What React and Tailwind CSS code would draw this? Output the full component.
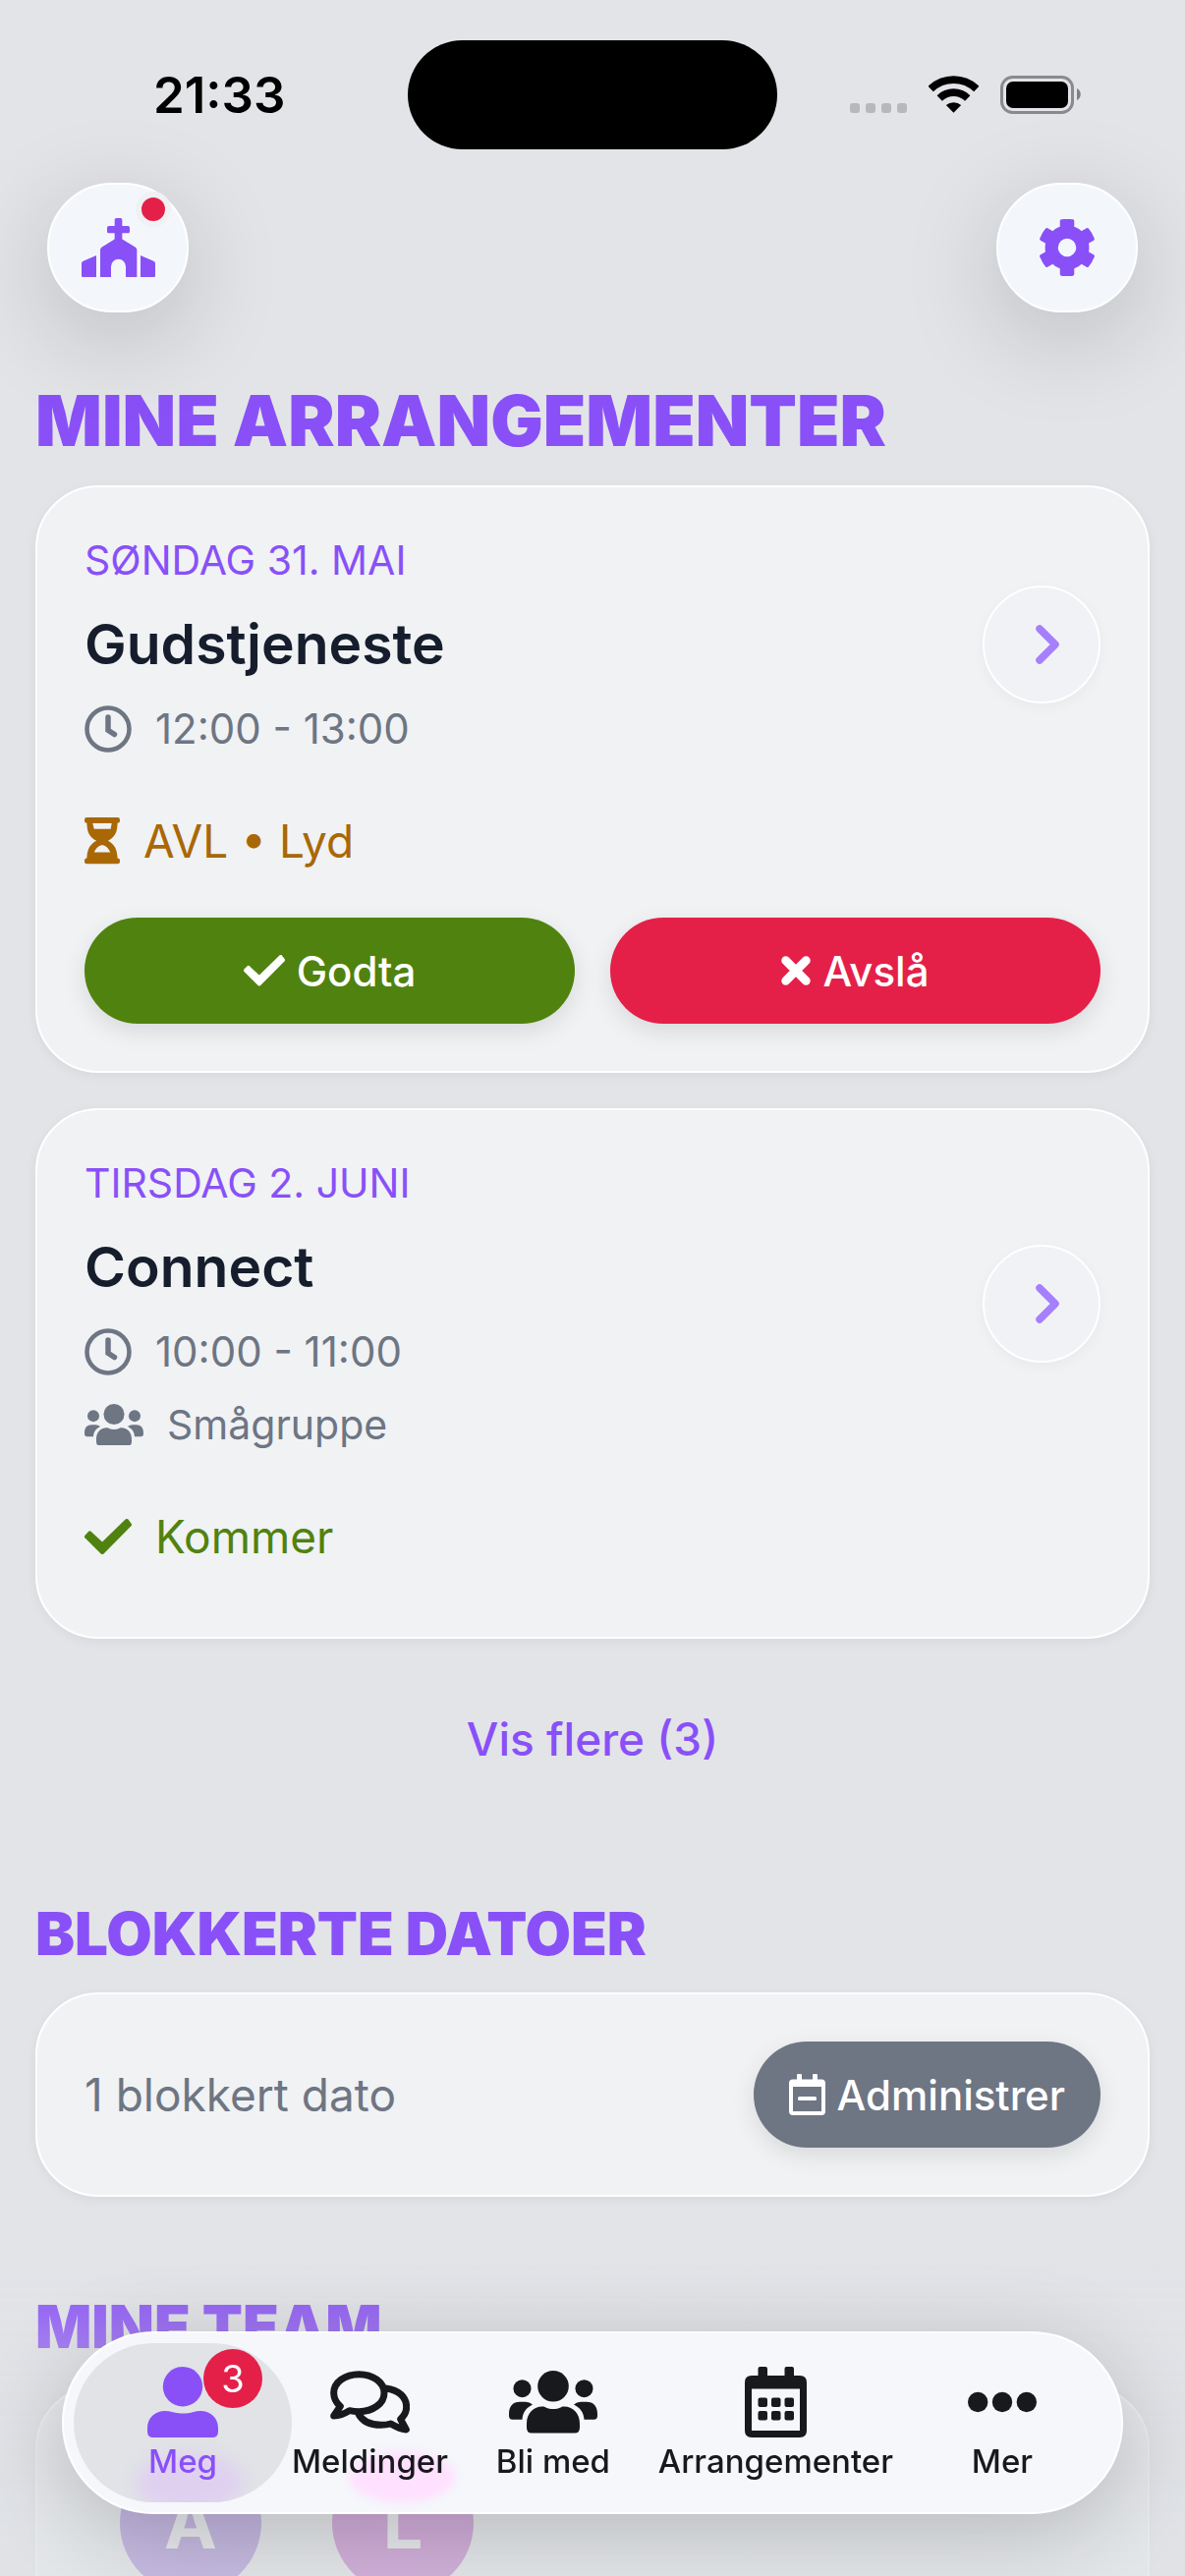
import { useState } from 'react';

/* ---------- Iconos ---------- */

const ChurchIcon = ({ className }) => (
  <svg viewBox="156 156 225 180" className={className} fill="currentColor" aria-hidden="true">
    <rect x="257" y="156" width="23" height="76" rx="5" />
    <rect x="234" y="180" width="69" height="22" rx="5" />
    <path d="M258 220h21l42 25q4 3 4 8v83h-34v-32a22.500 22.500 0 0 0-45 0v32h-33v-83q0-5 4-8z" />
    <path d="M201 270v66h-41q-4 0-4-4v-38q0-5 5-7z" />
    <path d="M336 270v66h41q4 0 4-4v-38q0-5-5-7z" />
  </svg>
);

const GearIcon = ({ className }) => (
  <svg viewBox="-88 -88 176 176" className={className} fill="currentColor" aria-hidden="true">
    <circle r="48" fill="none" stroke="currentColor" strokeWidth="40" />
    {[0, 60, 120, 180, 240, 300].map((angle) => (
      <path key={angle} transform={`rotate(${angle})`} d="M-22-50v-32q0-4 4-5 18-3 36 0 4 1 4 5v32z" />
    ))}
  </svg>
);

const ClockIcon = ({ className }) => (
  <svg viewBox="0 0 48 48" className={className} fill="none" stroke="currentColor" aria-hidden="true">
    <circle cx="24" cy="24" r="21.500" strokeWidth="4.500" />
    <path d="M24 12v13.200l6.500 4.300" strokeWidth="5.500" strokeLinecap="round" />
  </svg>
);

const HourglassIcon = ({ className }) => (
  <svg viewBox="217 893 92 121" className={className} fill="currentColor" aria-hidden="true">
    <rect x="217" y="893" width="92" height="15" rx="6" />
    <rect x="217" y="999" width="92" height="15" rx="6" />
    <path
      fillRule="evenodd"
      d="M223 903C223 935 232 945 248 953.500 232 962 223 975 223 1003H303C303 975 294 962 278 953.500 294 945 303 935 303 903ZM238 908H288L285 923H242ZM242 984C248 970 256 965 263 965S279 970 284 984Z"
    />
  </svg>
);

const CheckIcon = ({ className }) => (
  <svg viewBox="627 1248 106 80" className={className} fill="currentColor" stroke="currentColor" strokeWidth="9" strokeLinejoin="round" aria-hidden="true">
    <path d="M631.500 1288 639 1280 667 1306 722 1252.500 728.500 1261 667 1323Z" />
  </svg>
);

const XIcon = ({ className }) => (
  <svg viewBox="0 0 29 29" className={className} fill="none" stroke="currentColor" strokeWidth="8.500" strokeLinecap="round" aria-hidden="true">
    <path d="M4.500 4.500l20 20M24.500 4.500l-20 20" />
  </svg>
);

const ChevronIcon = ({ className }) => (
  <svg viewBox="0 0 26 42" className={className} fill="none" stroke="currentColor" strokeWidth="7.500" strokeLinecap="round" strokeLinejoin="round" aria-hidden="true">
    <path d="M5 5l16 16L5 37" />
  </svg>
);

const UsersIcon = ({ className }) => (
  <svg viewBox="0 0 90 64" className={className} fill="currentColor" aria-hidden="true">
    <circle cx="45" cy="15.800" r="15.800" />
    <circle cx="13.500" cy="18.200" r="9" />
    <circle cx="76.500" cy="18.200" r="9" />
    <path d="M18 54C18 43 25 36.500 34 36.500 36 36.500 36.500 37 37.500 37.500 42 39.500 48 39.500 52.500 37.500 53.500 37 54 36.500 56 36.500 65 36.500 72 43 72 54V58Q72 63.500 67 63.500H23Q18 63.500 18 58Z" />
    <path d="M0 44C0 36 4 31.700 11 31.700H17Q21 31.700 24 34.500C17 38 14 43 13.500 49.700H3.500Q0 49.700 0 46Z" />
    <path d="M90 44C90 36 86 31.700 79 31.700H73Q69 31.700 66 34.500C73 38 76 43 76.500 49.700H86.500Q90 49.700 90 46Z" />
  </svg>
);

const UserIcon = ({ className }) => (
  <svg viewBox="0 0 72 72" className={className} fill="currentColor" aria-hidden="true">
    <circle cx="36" cy="20.200" r="20.200" />
    <path d="M0 62C0 52 8 45 18 45Q22 45 25 46C32 48 40 48 47 46Q50 45 54 45C64 45 72 52 72 62V66Q72 72 66 72H6Q0 72 0 66Z" />
  </svg>
);

const CommentsIcon = ({ className }) => (
  <svg viewBox="825 129 243 190" className={className} fill="none" stroke="currentColor" strokeWidth="21" strokeLinejoin="round" aria-hidden="true">
    <path d="M836 267 856 238C844 227 836 213 836 197 836 165 870 140 913 140S990 165 990 197 956 254 913 254C902 254 893 253 884 251 870 260 852 267 836 267Z" />
    <path d="M995 183C1035 188 1058 210 1058 240 1058 255 1050 268 1040 277L1057 309C1040 307 1025 300 1010 291 1000 294 990 295 980 295 945 295 922 282 911 260" />
  </svg>
);

const CalendarDaysIcon = ({ className }) => (
  <svg viewBox="0 0 63 72" className={className} fill="currentColor" aria-hidden="true">
    <rect x="13.500" width="9.500" height="14" rx="2" />
    <rect x="40.500" width="9.500" height="14" rx="2" />
    <path fillRule="evenodd" d="M7 9H56Q63 9 63 16V65Q63 72 56 72H7Q0 72 0 65V16Q0 9 7 9ZM7 22.500V65H56V22.500Z" />
    {[31.5, 45].map((y) =>
      [13.5, 27, 40.5].map((x) => <rect key={`${x}-${y}`} x={x} y={y} width="9.500" height="9.500" rx="2" />)
    )}
  </svg>
);

const CalendarMinusIcon = ({ className }) => (
  <svg viewBox="0 0 37 42" className={className} fill="currentColor" aria-hidden="true">
    <rect x="8" width="5" height="9" rx="1" />
    <rect x="24" width="5" height="9" rx="1" />
    <path fillRule="evenodd" d="M4 5.500H33Q37 5.500 37 9.500V38Q37 42 33 42H4Q0 42 0 38V9.500Q0 5.500 4 5.500ZM4 13V38H33V13Z" />
    <rect x="9" y="23" width="19" height="4" rx="1.500" />
  </svg>
);

const EllipsisIcon = ({ className }) => (
  <svg viewBox="0 0 70 72" className={className} fill="currentColor" aria-hidden="true">
    <circle cx="10.200" cy="36" r="10.200" />
    <circle cx="35" cy="36" r="10.200" />
    <circle cx="59.800" cy="36" r="10.200" />
  </svg>
);

const WifiIcon = ({ className }) => (
  <svg viewBox="0 0 50 38" className={className} fill="none" stroke="currentColor" strokeWidth="7.500" aria-hidden="true">
    <path d="M2.100 13.300A33 33 0 0 1 47.900 13.300M11 22.500A20.200 20.200 0 0 1 39 22.500" />
    <path d="M17.500 29.500A11.300 11.300 0 0 1 32.500 29.500L25 37Z" fill="currentColor" stroke="none" />
  </svg>
);

const BatteryIcon = ({ className }) => (
  <svg viewBox="0 0 83 40" className={className} aria-hidden="true">
    <rect x="1.500" y="1.500" width="72" height="36" rx="11" fill="none" stroke="#8a8a8e" strokeWidth="3" />
    <rect x="6" y="6" width="63" height="27" rx="7" fill="#000" />
    <path d="M78 13c5 2 5 10 0 12z" fill="#7f7f83" />
  </svg>
);

/* ---------- Datos ---------- */

const arrangementer = [
  {
    id: 1,
    dato: 'Søndag 31. mai',
    tittel: 'Gudstjeneste',
    tid: '12:00 - 13:00',
    oppgave: 'AVL • Lyd',
    status: 'venter',
  },
  {
    id: 2,
    dato: 'Tirsdag 2. juni',
    tittel: 'Connect',
    tid: '10:00 - 11:00',
    gruppe: 'Smågruppe',
    status: 'kommer',
  },
];

const faner = [
  { id: 'meldinger', navn: 'Meldinger', Icon: CommentsIcon, size: 'w-[81px]' },
  { id: 'bli-med', navn: 'Bli med', Icon: UsersIcon, size: 'w-[90px]' },
  { id: 'arrangementer', navn: 'Arrangementer', Icon: CalendarDaysIcon, size: 'w-[63px]' },
];

/* ---------- Componentes ---------- */

const StatusBar = () => (
  <div className="grid grid-cols-3 items-center px-[40px] pt-[41px]">
    <span className="pl-[116px] text-[51px] leading-[60px] font-semibold text-black">21:33</span>
    <div className="h-[111px] w-full rounded-full bg-black" />
    <div className="flex items-center justify-end pr-[65px]">
      <div className="mt-[27px] mr-[22px] flex gap-[6px]">
        {[0, 1, 2, 3].map((i) => (
          <span key={i} className="size-[10px] rounded-[3px] bg-[#b7b8bc]" />
        ))}
      </div>
      <WifiIcon className="mr-[22px] w-[51px] text-black" />
      <BatteryIcon className="w-[83px]" />
    </div>
  </div>
);

const HeaderButton = ({ label, children }) => (
  <button
    type="button"
    aria-label={label}
    className="relative flex h-[132px] w-[144px] items-center justify-center rounded-full border-2 border-white bg-[#f3f7fc] text-[#8950f8] shadow-[0_24px_100px_rgba(0,0,0,0.18)]"
  >
    {children}
  </button>
);

const Card = ({ children }) => (
  <div className="rounded-[64px] border-2 border-white bg-[#f0f2f4] p-12 shadow-[0_3px_12px_rgba(0,0,0,0.05)]">
    {children}
  </div>
);

const PillButton = ({ color, children }) => (
  <button
    type="button"
    className={`flex h-[108px] items-center justify-center gap-[12px] rounded-full text-[42px] font-medium text-white shadow-[0_8px_24px_rgba(0,0,0,0.10)] ${color}`}
  >
    {children}
  </button>
);

const ArrangementCard = ({ item }) => (
  <Card>
    <div className="flex items-center justify-between">
      <div>
        <p className="text-[41px] leading-[52px] text-[#8950f8] uppercase">{item.dato}</p>
        <h3 className="mt-6 text-[57px] leading-[72px] font-semibold text-[#161e2d]">{item.tittel}</h3>
        <p className="mt-6 flex items-center gap-6 text-[42px] leading-[52px] text-[#6e7583]">
          <ClockIcon className="w-[48px]" />
          {item.tid}
        </p>
        {item.gruppe && (
          <p className="mt-[22px] flex items-center gap-6 text-[41px] leading-[52px] text-[#6e7583]">
            <UsersIcon className="w-[60px]" />
            {item.gruppe}
          </p>
        )}
      </div>
      <button
        type="button"
        aria-label={`Åpne ${item.tittel}`}
        className="flex size-[120px] items-center justify-center rounded-full border-2 border-white bg-[#f1f2f5] pl-3 text-[#a57ffc] shadow-[0_4px_14px_rgba(0,0,0,0.04)]"
      >
        <ChevronIcon className="w-[26px]" />
      </button>
    </div>

    {item.status === 'venter' ? (
      <p className="mt-[58px] mb-6 flex items-center gap-6 text-[46px] leading-[60px] text-[#a96805]">
        <HourglassIcon className="w-[36px]" />
        {item.oppgave}
      </p>
    ) : (
      <p className="mt-[58px] mb-6 flex items-center gap-6 text-[46px] leading-[60px] text-[#50820f]">
        <CheckIcon className="w-[48px]" />
        Kommer
      </p>
    )}

    {item.status === 'venter' && (
      <div className="mt-12 grid grid-cols-2 gap-9">
        <PillButton color="bg-[#50820f]">
          <CheckIcon className="w-[42px]" />
          Godta
        </PillButton>
        <PillButton color="bg-[#e42049]">
          <XIcon className="w-[30px]" />
          Avslå
        </PillButton>
      </div>
    )}
  </Card>
);

const SectionTitle = ({ children }) => (
  <h2 className="mb-6 text-[60px] leading-[72px] font-black text-[#8950f8] uppercase">{children}</h2>
);

const Avatar = ({ bokstav, color }) => (
  <span className={`flex size-[144px] items-center justify-center rounded-full text-[72px] leading-none font-bold text-white ${color}`}>
    {bokstav}
  </span>
);

const TabBar = ({ aktiv, onChange }) => (
  <nav className="fixed inset-x-[63px] bottom-[63px] z-20 flex h-[186px] rounded-full border-2 border-white bg-[#f5f7fb] p-[10px] text-[#17191c] shadow-[0_20px_90px_rgba(0,0,0,0.20)]">
    {/* Reflejo de los avatares detrás de la barra */}
    <span className="absolute bottom-[10px] left-[290px] h-[52px] w-[108px] rounded-[50%] bg-[#ffe0ff] blur-[4px]" />

    <button
      type="button"
      onClick={() => onChange('meg')}
      className={`relative flex w-[222px] shrink-0 flex-col items-center overflow-hidden rounded-full pt-[24px] ${
        aktiv === 'meg' ? 'bg-[#e1e3e7] text-[#8950f8]' : ''
      }`}
    >
      <span className="absolute bottom-[-10px] left-[64px] h-[60px] w-[108px] rounded-[50%] bg-[#dfd0f0] blur-[8px]" />
      <UserIcon className="relative w-[72px]" />
      <span className="relative mt-1 text-[33px] leading-[40px] font-medium">Meg</span>
      <span className="absolute top-[6px] left-[132px] flex size-[60px] items-center justify-center rounded-full bg-[#e42049] text-[38px] leading-none text-white">
        3
      </span>
    </button>

    <div className="relative flex flex-1 justify-between">
      {faner.map(({ id, navn, Icon, size }) => (
        <button key={id} type="button" onClick={() => onChange(id)} className="flex flex-col items-center pt-[24px]">
          <span className="flex h-[72px] items-center">
            <Icon className={size} />
          </span>
          <span className="mt-1 text-[33px] leading-[40px] font-medium">{navn}</span>
        </button>
      ))}
    </div>

    <button type="button" onClick={() => onChange('mer')} className="flex w-[222px] shrink-0 flex-col items-center pt-[24px]">
      <EllipsisIcon className="w-[70px]" />
      <span className="mt-1 text-[33px] leading-[40px] font-medium">Mer</span>
    </button>
  </nav>
);

export default function App() {
  const [fane, setFane] = useState('meg');

  return (
    <div className="flex h-screen flex-col overflow-hidden bg-[#e3e4e8] font-['Inter',sans-serif]">
      <StatusBar />

      {/* Header */}
      <header className="relative z-10 flex justify-between px-12 pt-[34px]">
        <HeaderButton label="Menighet">
          <ChurchIcon className="w-[75px]" />
          <span className="absolute top-[7px] right-[16px] size-[36px] rounded-full border-6 border-[#f0f1f3] bg-[#e42049]" />
        </HeaderButton>
        <HeaderButton label="Innstillinger">
          <GearIcon className="w-[58px]" />
        </HeaderButton>
      </header>

      <main className="flex-1 overflow-y-auto px-9 pt-[68px] [scrollbar-width:none]">
        {/* Arrangementer */}
        <section>
          <h1 className="mb-6 text-[71px] leading-[84px] font-black text-[#8950f8] uppercase">Mine arrangementer</h1>
          <div className="flex flex-col gap-9">
            {arrangementer.map((item) => (
              <ArrangementCard key={item.id} item={item} />
            ))}
          </div>
          <button type="button" className="mt-9 block w-full py-9 text-[46px] leading-[60px] font-medium text-[#8950f8]">
            Vis flere (3)
          </button>
        </section>

        {/* Blokkerte datoer */}
        <section className="mt-24">
          <SectionTitle>Blokkerte datoer</SectionTitle>
          <Card>
            <div className="flex items-center justify-between">
              <p className="text-[46px] leading-[60px] text-[#6e7583]">1 blokkert dato</p>
              <PillButton color="bg-[#6e7583] px-9">
                <CalendarMinusIcon className="w-[37px]" />
                Administrer
              </PillButton>
            </div>
          </Card>
        </section>

        {/* Team */}
        <section className="mt-24">
          <SectionTitle>Mine team</SectionTitle>
          <Card>
            <div className="flex gap-[72px] px-9 pt-[18px] pb-24">
              <Avatar bokstav="A" color="bg-[#7b49d2]" />
              <Avatar bokstav="L" color="bg-[#aa21b7]" />
            </div>
          </Card>
        </section>
      </main>

      {/* Desvanecido inferior */}
      <div className="pointer-events-none fixed inset-x-0 bottom-0 z-10 h-[322px] bg-linear-to-b from-[#dfe1e5]/0 via-[#dfe1e5]/70 via-60% to-[#e0e2e6]/75" />

      <TabBar aktiv={fane} onChange={setFane} />
    </div>
  );
}
